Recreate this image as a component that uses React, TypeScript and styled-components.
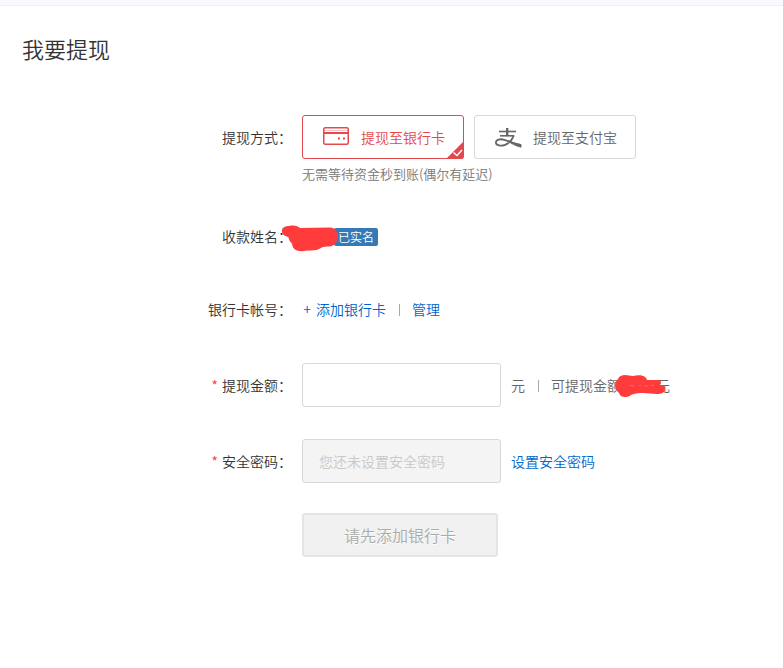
import React, { useState } from "react";
import styled, { createGlobalStyle } from "styled-components";

const GlobalStyle = createGlobalStyle`
  *, *::before, *::after { box-sizing: border-box; }
  body {
    margin: 0;
    background: #fff;
    color: #333;
    font: 350 14px/20px "Noto Sans CJK SC", "Microsoft YaHei", sans-serif;
  }
  input, button { font-family: inherit; font-weight: inherit; }
`;

const TopBand = styled.div`
  height: 6px;
  background: #f8f9fe;
  border-bottom: 1px solid #f0f0f2;
`;

const Page = styled.main`
  padding: 26px 22px 40px;
`;

const Title = styled.h1`
  margin: 0 0 51px;
  font-size: 22px;
  line-height: 32px;
  font-weight: inherit;
`;

const Form = styled.form`
  display: flex;
  flex-direction: column;
`;

const Row = styled.div<{ $gap: number }>`
  display: grid;
  grid-template-columns: 270px 1fr;
  column-gap: 10px;
  align-items: center;
  margin-bottom: ${(p) => p.$gap}px;
`;

const FieldName = styled.label`
  text-align: right;
  white-space: nowrap;
`;

const Required = styled.span`
  color: #f33;
  margin-right: 4px;
`;

const Content = styled.div`
  grid-column: 2;
  display: flex;
  align-items: center;
  white-space: nowrap;
`;

const Methods = styled(Content)`
  gap: 10px;
`;

const Method = styled.label<{ $active: boolean }>`
  position: relative;
  display: flex;
  align-items: center;
  gap: 11px;
  width: 162px;
  height: 44px;
  padding-left: 19px;
  border: 1px solid ${(p) => (p.$active ? "#e4484c" : "#d8d8d8")};
  border-radius: 3px;
  color: ${(p) => (p.$active ? "#e4484c" : "#666")};
  cursor: pointer;
`;

const HiddenRadio = styled.input`
  position: absolute;
  opacity: 0;
  margin: 0;
`;

const Corner = styled.svg`
  position: absolute;
  right: -1px;
  bottom: -1px;
`;

const Hint = styled.p`
  grid-column: 2;
  margin: 5px 0 0;
  font-size: 13px;
  color: #777;
`;

const Payee = styled.span`
  position: relative;
  width: 32px;
  height: 20px;
`;

const Badge = styled.span`
  align-self: flex-end;
  padding: 0 4px;
  border-radius: 2px;
  background: #337ab7;
  color: #fff;
  font-size: 12px;
  line-height: 18px;
`;

const Link = styled.a`
  color: #0066cc;
  text-decoration: none;
`;

const Plus = styled.span`
  display: inline-block;
  width: 10px;
  margin-right: 4px;
  text-align: center;
`;

const Divider = styled.span`
  width: 1px;
  height: 12px;
  margin: 2px 12px 0 13px;
  background: #aaa;
`;

const TextField = styled.input`
  width: 199px;
  height: 44px;
  margin-right: 10px;
  padding: 0 16px;
  border: 1px solid #d8d8d8;
  border-radius: 3px;
  background: #fff;
  font-size: 14px;
  &:disabled { background: #f4f4f4; }
  &::placeholder { color: #c8c8c8; opacity: 1; }
`;

const Unit = styled.span`
  color: #666;
`;

const Balance = styled.span`
  position: relative;
  width: 35px;
  height: 20px;
`;

const Scribble = styled.svg<{ $left: number; $top: number }>`
  position: absolute;
  left: ${(p) => p.$left}px;
  top: ${(p) => p.$top}px;
`;

const Submit = styled.button`
  width: 196px;
  height: 44px;
  border: 2px solid #e5e5e5;
  border-radius: 3px;
  background: #f1f1f1;
  color: #aaa;
  font-size: 16px;
  text-shadow: 0 1px 0 #fff;
`;

const CardIcon = () => (
  <svg width="28" height="22" viewBox="0 0 28 22" fill="none" aria-hidden="true">
    <path d="M2 4.5h24" stroke="#f3c3c5" strokeWidth="1" />
    <rect x="1.75" y="1.75" width="24.5" height="16.5" rx="1.5" stroke="#e4484c" strokeWidth="1.5" />
    <path d="M2 7h24" stroke="#e4484c" strokeWidth="2" />
    <path d="M16 11.500h2v2h-2zM21 11.500h2v2h-2z" fill="#e4484c" />
  </svg>
);

const AlipayIcon = () => (
  <svg width="28" height="24" viewBox="0 -2 28 24" fill="none" stroke="#666" aria-hidden="true">
    <path d="M5 4.5h17" strokeWidth="1.6" />
    <path d="M13.200 1v8" strokeWidth="2.4" />
    <path d="M6 8.800h14.300" strokeWidth="1.6" />
    <path
      d="M19.600 8.800c-1.600 4.400-4.800 7.600-8.400 9-4 1.600-9.300 1-9.300-2.300 0-3.100 4.400-3.900 8.400-2.700C15.600 14.400 20 16.800 27 18.200"
      strokeWidth="1.8"
    />
    <path d="M14 13.800c4 1.500 8 2.900 13 3.800v2.600C21 18.600 17 16.500 14 13.800z" fill="#666" strokeWidth="1" />
  </svg>
);

type MethodKey = "bank" | "alipay";

const METHODS: { key: MethodKey; text: string; icon: React.ReactNode }[] = [
  { key: "bank", text: "提现至银行卡", icon: <CardIcon /> },
  { key: "alipay", text: "提现至支付宝", icon: <AlipayIcon /> },
];

export default function App() {
  const [method, setMethod] = useState<MethodKey>("bank");

  return (
    <>
      <GlobalStyle />
      <TopBand />
      <Page>
        <Title>我要提现</Title>
        <Form onSubmit={(e) => e.preventDefault()}>
          <Row $gap={42} role="radiogroup" aria-labelledby="method-name">
            <FieldName as="span" id="method-name">提现方式：</FieldName>
            <Methods>
              {METHODS.map((m) => (
                <Method key={m.key} $active={m.key === method}>
                  <HiddenRadio
                    type="radio"
                    name="method"
                    checked={m.key === method}
                    onChange={() => setMethod(m.key)}
                  />
                  {m.icon}
                  {m.text}
                  {m.key === method && (
                    <Corner width="18" height="18" viewBox="0 0 18 18" aria-hidden="true">
                      <path d="M18 0v15a3 3 0 0 1-3 3H0z" fill="#e4484c" />
                      <path d="M7.500 11.500l3.500 3 5-5.500" fill="none" stroke="#fff" strokeWidth="1.500" />
                    </Corner>
                  )}
                </Method>
              ))}
            </Methods>
            <Hint>无需等待资金秒到账(偶尔有延迟)</Hint>
          </Row>

          <Row $gap={53}>
            <FieldName as="span">收款姓名：</FieldName>
            <Content>
              <Payee>
                <Scribble $left={-21} $top={-2} width="58" height="28" viewBox="0 0 58 28" aria-hidden="true">
                  <path
                    d="M1 8C0 4 4 2 8 2c5-1 9 0 11 2l30-.5c5 0 8 4 8 9s-3 9-8 10c-4 0-7 0-10 2-3 2-8 2-13 2-5 1-9 1-12-1-3-2-2-5-4-7-3-3-1-5-4-6C3 12 1 10 1 8z"
                    fill="#ff3b3b"
                  />
                </Scribble>
              </Payee>
              <Badge>已实名</Badge>
            </Content>
          </Row>

          <Row $gap={44}>
            <FieldName as="span">银行卡帐号：</FieldName>
            <Content>
              <Link href="#add-card"><Plus>+</Plus>添加银行卡</Link>
              <Divider />
              <Link href="#manage">管理</Link>
            </Content>
          </Row>

          <Row $gap={32}>
            <FieldName htmlFor="amount"><Required>*</Required>提现金额：</FieldName>
            <Content>
              <TextField id="amount" type="text" inputMode="decimal" />
              <Unit>元</Unit>
              <Divider />
              <Unit>可提现金额</Unit>
              <Balance>
                <Scribble $left={-7} $top={-2} width="52" height="26" viewBox="0 0 52 26" aria-hidden="true">
                  <path
                    d="M1 12c0-3 2-4 3-6C5 3 8 2 11 2c3 0 5 1 8 1 4-1 10-1 12 1 2 1 1 3 3 3l10 0c3 0 4 3 2 5 4 0 5 2 5 4 0 4-4 5-8 5l-14-1c-4 0-6 0-9 1-3 0-4 3-8 3-4 0-6-1-7-4-2-2-4-4-4-8z"
                    fill="#ff3b3b"
                  />
                  <path d="M15 12l5 1M25 12.500h2M30 13h4M37 12.500h3" stroke="#ff6464" strokeWidth="1" />
                </Scribble>
              </Balance>
              <Unit>元</Unit>
            </Content>
          </Row>

          <Row $gap={30}>
            <FieldName htmlFor="password"><Required>*</Required>安全密码：</FieldName>
            <Content>
              <TextField id="password" type="password" placeholder="您还未设置安全密码" disabled />
              <Link href="#set-password">设置安全密码</Link>
            </Content>
          </Row>

          <Row $gap={0}>
            <Content>
              <Submit type="submit" disabled>请先添加银行卡</Submit>
            </Content>
          </Row>
        </Form>
      </Page>
    </>
  );
}
